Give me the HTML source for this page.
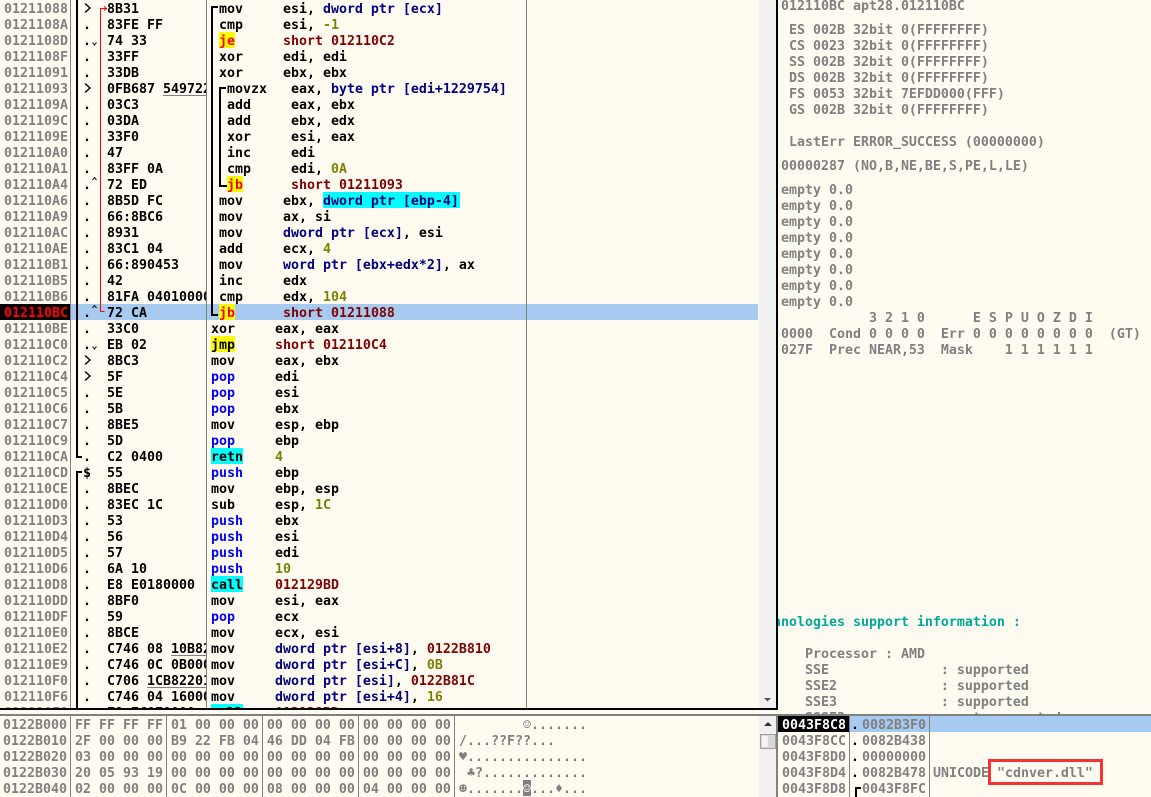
<!DOCTYPE html>
<html><head><meta charset="utf-8"><style>
html,body{margin:0;padding:0;background:#FFFBF0;}
#root{position:relative;width:1151px;height:797px;overflow:hidden;background:#FFFBF0;font:bold 13.29px/16px "DejaVu Sans Mono","Liberation Mono",monospace;color:#000;}
.a{position:absolute;}
pre{position:absolute;margin:0;font:inherit;line-height:16px;white-space:pre;overflow:hidden;}
.g{color:#808080;}
.y{background:#FFFF00;}
.c{background:#00FFFF;}
.r{color:#FF0000;}
.b{color:#0000FF;}
.n{color:#000080;}
.m{color:#800000;}
.o{color:#808000;}
.k{background:#000;}
</style></head><body><div id="root">

<!-- selected row -->
<div class="a" style="left:71px;top:304px;width:687px;height:16px;background:#A6CAF0"></div>
<div class="a k" style="left:0;top:304px;width:70px;height:16px"></div>

<!-- mnemonic highlights -->
<div class="a y" style="left:219px;top:32px;width:16px;height:16px"></div>
<div class="a y" style="left:227px;top:176px;width:16px;height:16px"></div>
<div class="a c" style="left:323px;top:192px;width:137px;height:16px"></div>
<div class="a y" style="left:219px;top:304px;width:16px;height:16px"></div>
<div class="a y" style="left:211px;top:336px;width:24px;height:16px"></div>
<div class="a c" style="left:211px;top:448px;width:32px;height:16px"></div>
<div class="a c" style="left:211px;top:576px;width:32px;height:16px"></div>
<div class="a c" style="left:211px;top:704px;width:32px;height:4px"></div>

<!-- disasm addresses -->
<pre class="g" style="left:4px;top:2px;width:66px;height:706px">01211088
0121108A
0121108D
0121108F
01211091
01211093
0121109A
0121109C
0121109E
012110A0
012110A1
012110A4
012110A6
012110A9
012110AC
012110AE
012110B1
012110B5
012110B6
<span class="r">012110BC</span>
012110BE
012110C0
012110C2
012110C4
012110C5
012110C6
012110C7
012110C9
012110CA
012110CD
012110CE
012110D0
012110D3
012110D4
012110D5
012110D6
012110D8
012110DD
012110DF
012110E0
012110E2
012110E9
012110F0
012110F6
012110F8</pre>

<!-- markers -->
<pre style="left:83px;top:2px;width:16px;height:706px"> 
.
.
.
.
 
.
.
.
.
.
.
.
.
.
.
.
.
.
.
.
.
 
 
.
.
.
.
.
$
.
.
.
.
.
.
.
.
.
.
.
.
.
.</pre>

<!-- hex -->
<pre style="left:107px;top:2px;width:99px;height:706px">8B31
83FE FF
74 33
33FF
33DB
0FB687 54972201
03C3
03DA
33F0
47
83FF 0A
72 ED
8B5D FC
66:8BC6
8931
83C1 04
66:890453
42
81FA 04010000
72 CA
33C0
EB 02
8BC3
5F
5E
5B
8BE5
5D
C2 0400
55
8BEC
83EC 1C
53
56
57
6A 10
E8 E0180000
8BF0
59
8BCE
C746 08 10B82201
C746 0C 0B000000
C706 1CB82201
C746 04 16000000
E8 7C0E0000</pre>

<!-- disasm -->
<pre style="left:211px;top:2px;width:315px;height:706px"> mov     esi, <span class="n">dword ptr [ecx]</span>
 cmp     esi, <span class="o">-1</span>
 <span class="r">je</span>      <span class="m">short 012110C2</span>
 xor     edi, edi
 xor     ebx, ebx
  movzx   eax, <span class="n">byte ptr [edi+1229754]</span>
  add     eax, ebx
  add     ebx, edx
  xor     esi, eax
  inc     edi
  cmp     edi, <span class="o">0A</span>
  <span class="r">jb</span>      <span class="m">short 01211093</span>
 mov     ebx, <span class="n">dword ptr [ebp-4]</span>
 mov     ax, si
 mov     <span class="n">dword ptr [ecx]</span>, esi
 add     ecx, <span class="o">4</span>
 mov     <span class="n">word ptr [ebx+edx*2]</span>, ax
 inc     edx
 cmp     edx, <span class="o">104</span>
 <span class="r">jb</span>      <span class="m">short 01211088</span>
xor     eax, eax
jmp     <span class="m">short 012110C4</span>
mov     eax, ebx
<span class="b">pop</span>     edi
<span class="b">pop</span>     esi
<span class="b">pop</span>     ebx
mov     esp, ebp
<span class="b">pop</span>     ebp
retn    <span class="o">4</span>
<span class="b">push</span>    ebp
mov     ebp, esp
sub     esp, <span class="o">1C</span>
<span class="b">push</span>    ebx
<span class="b">push</span>    esi
<span class="b">push</span>    edi
<span class="b">push</span>    <span class="o">10</span>
call    <span class="m">012129BD</span>
mov     esi, eax
<span class="b">pop</span>     ecx
mov     ecx, esi
mov     <span class="n">dword ptr [esi+8]</span>, <span class="m">0122B810</span>
mov     <span class="n">dword ptr [esi+C]</span>, <span class="o">0B</span>
mov     <span class="n">dword ptr [esi]</span>, <span class="m">0122B81C</span>
mov     <span class="n">dword ptr [esi+4]</span>, <span class="o">16</span>
call    <span class="m">012129BD</span></pre>

<!-- graphics over disasm -->
<svg class="a" style="left:0;top:0" width="778" height="716" shape-rendering="crispEdges">
  <rect x="70" y="0" width="1" height="708" fill="#808080"/>
  <rect x="206" y="0" width="1" height="708" fill="#808080"/>
  <rect x="526" y="0" width="1" height="708" fill="#808080"/>
  <!-- hex brackets -->
  <path d="M77 0V457H82" fill="none" stroke="#000" stroke-width="2"/>
  <path d="M82 472H77V708" fill="none" stroke="#000" stroke-width="2"/>
  <!-- disasm brackets -->
  <path d="M218 7H212V315H218" fill="none" stroke="#000" stroke-width="2"/>
  <path d="M226 88H220V186H227" fill="none" stroke="#000" stroke-width="2"/>
  <!-- red jump -->
  <path d="M104.5 311.5H100.5V8.5H106" fill="none" stroke="#FF0000" stroke-width="1"/>
  <path d="M104 6.5l2.5 2-2.5 2" fill="none" stroke="#FF0000" stroke-width="1"/>
  <!-- hex underlines -->
  <rect x="163" y="95" width="43" height="1" fill="#808080"/>
  <rect x="171" y="655" width="35" height="1" fill="#808080"/>
  <rect x="147" y="687" width="59" height="1" fill="#808080"/>
  <!-- chevron markers -->
  <g fill="none" stroke="#000" stroke-width="1.400" shape-rendering="auto">
    <path d="M85 3.500l5 4.500-5 4.500"/>
    <path d="M85 83.500l5 4.500-5 4.500"/>
    <path d="M85 355.500l5 4.500-5 4.500"/>
    <path d="M85 371.500l5 4.500-5 4.500"/>
  </g>
  <!-- small jump arrows -->
  <g fill="none" stroke="#000" stroke-width="1" shape-rendering="auto">
    <path d="M92.500 42.500l2 2.500 2-2.500"/>
    <path d="M92.500 180l2-2.500 2 2.500"/>
    <path d="M92.500 308l2-2.500 2 2.500"/>
    <path d="M92.500 346.500l2 2.500 2-2.500"/>
  </g>
  <!-- scrollbar -->
  <rect x="759" y="0" width="17" height="708" fill="#F0F0F0"/>
  <path d="M764 698h7l-3.500 3.500z" fill="#555" shape-rendering="auto"/>
  <rect x="776" y="0" width="2" height="710" fill="#000"/>
  <rect x="0" y="708" width="778" height="2" fill="#000"/>
</svg>

<!-- right pane -->
<pre class="g" style="left:781px;top:-1px;width:370px;height:16px">012110BC apt28.012110BC</pre>
<pre class="g" style="left:781px;top:23px;width:370px;height:96px"> ES 002B 32bit 0(FFFFFFFF)
 CS 0023 32bit 0(FFFFFFFF)
 SS 002B 32bit 0(FFFFFFFF)
 DS 002B 32bit 0(FFFFFFFF)
 FS 0053 32bit 7EFDD000(FFF)
 GS 002B 32bit 0(FFFFFFFF)</pre>
<pre class="g" style="left:781px;top:135px;width:370px;height:16px"> LastErr ERROR_SUCCESS (00000000)</pre>
<pre class="g" style="left:781px;top:159px;width:370px;height:16px">00000287 (NO,B,NE,BE,S,PE,L,LE)</pre>
<pre class="g" style="left:781px;top:183px;width:370px;height:192px">empty 0.0
empty 0.0
empty 0.0
empty 0.0
empty 0.0
empty 0.0
empty 0.0
empty 0.0
           3 2 1 0      E S P U O Z D I
0000  Cond 0 0 0 0  Err 0 0 0 0 0 0 0 0  (GT)
027F  Prec NEAR,53  Mask    1 1 1 1 1 1</pre>
<div class="a" style="left:778px;top:615px;width:373px;height:16px;overflow:hidden"><pre style="left:-5px;top:0;color:#00A89C;overflow:visible">hnologies support information :</pre></div>
<pre class="g" style="left:805px;top:647px;width:346px;height:67px">Processor : AMD
SSE              : supported
SSE2             : supported
SSE3             : supported
SSSE3            : not supported</pre>

<!-- bottom band -->
<div class="a" style="left:0;top:710px;width:778px;height:4px;background:#FFFBF0"></div>
<div class="a" style="left:0;top:714px;width:1151px;height:2px;background:#808080"></div>

<!-- hex dump -->
<pre class="g" style="left:3px;top:718px;width:67px;height:79px">0122B000
0122B010
0122B020
0122B030
0122B040</pre>
<pre class="g" style="left:75px;top:718px;width:380px;height:79px">FF FF FF FF 01 00 00 00 00 00 00 00 00 00 00 00
2F 00 00 00 B9 22 FB 04 46 DD 04 FB 00 00 00 00
03 00 00 00 00 00 00 00 00 00 00 00 00 00 00 00
20 05 93 19 00 00 00 00 00 00 00 00 00 00 00 00
02 00 00 00 0C 00 00 00 08 00 00 00 04 00 00 00</pre>
<div class="a" style="left:523px;top:780px;width:8px;height:16px;background:#808080"></div>
<pre class="g" style="left:459px;top:718px;width:136px;height:79px">        ☺.......
/...??F??...
♥...............
 ♣?.............
☻.......<span style="color:#FFFBF0">☺</span>...♦...</pre>

<svg class="a" style="left:0;top:716px" width="1151" height="81" shape-rendering="crispEdges">
  <rect x="70" y="0" width="1" height="81" fill="#808080"/>
  <rect x="166" y="0" width="1" height="81" fill="#808080"/>
  <rect x="262" y="0" width="1" height="81" fill="#808080"/>
  <rect x="358" y="0" width="1" height="81" fill="#808080"/>
  <rect x="454" y="0" width="1" height="81" fill="#808080"/>
  <!-- scrollbar -->
  <rect x="759" y="0" width="17" height="81" fill="#F0F0F0"/>
  <path d="M764 10h8l-4-4z" fill="#333" shape-rendering="auto"/>
  <rect x="760.500" y="18.500" width="15" height="14" fill="#D8D8D8" stroke="#A0A0A0"/>
  <rect x="762" y="20" width="6" height="11" fill="#F4F4F4"/>
  <rect x="776" y="0" width="2" height="81" fill="#808080"/>
</svg>

<!-- stack -->
<div class="a" style="left:850px;top:716px;width:301px;height:16px;background:#A6CAF0"></div>
<div class="a k" style="left:778px;top:716px;width:71px;height:16px"></div>
<pre class="g" style="left:782px;top:718px;width:67px;height:79px"><span style="color:#fff">0043F8C8</span>
0043F8CC
0043F8D0
0043F8D4
0043F8D8</pre>
<pre style="left:851px;top:718px;width:10px;height:64px">.
.
.
.</pre>
<pre class="g" style="left:862px;top:718px;width:67px;height:79px">0082B3F0
0082B438
00000000
0082B478
0043F8FC</pre>
<pre class="g" style="left:933px;top:766px;width:218px;height:16px">UNICODE "cdnver.dll"</pre>
<svg class="a" style="left:0;top:716px" width="1151" height="81" shape-rendering="crispEdges">
  <rect x="849" y="0" width="1" height="81" fill="#808080"/>
  <rect x="929" y="0" width="1" height="81" fill="#808080"/>
  <path d="M861 72H856V81" fill="none" stroke="#000" stroke-width="2"/>
  <rect x="989.500" y="44.500" width="112" height="23" fill="none" stroke="#F63434" stroke-width="3"/>
</svg>

</div></body></html>
